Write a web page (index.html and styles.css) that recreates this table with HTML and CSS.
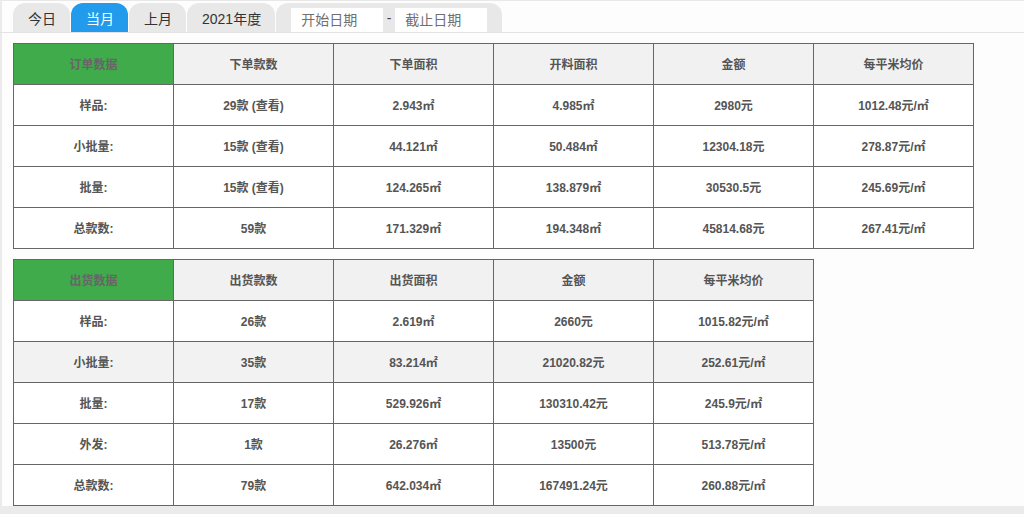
FILE: index.html
```html
<!DOCTYPE html>
<html lang="zh">
<head>
<meta charset="utf-8">
<link rel="stylesheet" href="styles.css">
</head>
<body>
<div class="page">
  <div class="tabbar">
    <div class="tab">今日</div>
    <div class="tab active">当月</div>
    <div class="tab">上月</div>
    <div class="tab">2021年度</div>
    <div class="tab range">
      <input class="date" type="text" placeholder="开始日期">
      <span class="dash">-</span>
      <input class="date" type="text" placeholder="截止日期">
    </div>
  </div>

  <table class="data t1">
    <tr class="head">
      <td class="green">订单数据</td><td>下单款数</td><td>下单面积</td><td>开料面积</td><td>金额</td><td>每平米均价</td>
    </tr>
    <tr><td>样品:</td><td>29款 (查看)</td><td>2.943㎡</td><td>4.985㎡</td><td>2980元</td><td>1012.48元/㎡</td></tr>
    <tr><td>小批量:</td><td>15款 (查看)</td><td>44.121㎡</td><td>50.484㎡</td><td>12304.18元</td><td>278.87元/㎡</td></tr>
    <tr><td>批量:</td><td>15款 (查看)</td><td>124.265㎡</td><td>138.879㎡</td><td>30530.5元</td><td>245.69元/㎡</td></tr>
    <tr><td>总款数:</td><td>59款</td><td>171.329㎡</td><td>194.348㎡</td><td>45814.68元</td><td>267.41元/㎡</td></tr>
  </table>

  <table class="data t2">
    <tr class="head">
      <td class="green">出货数据</td><td>出货款数</td><td>出货面积</td><td>金额</td><td>每平米均价</td>
    </tr>
    <tr><td>样品:</td><td>26款</td><td>2.619㎡</td><td>2660元</td><td>1015.82元/㎡</td></tr>
    <tr class="hover"><td>小批量:</td><td>35款</td><td>83.214㎡</td><td>21020.82元</td><td>252.61元/㎡</td></tr>
    <tr><td>批量:</td><td>17款</td><td>529.926㎡</td><td>130310.42元</td><td>245.9元/㎡</td></tr>
    <tr><td>外发:</td><td>1款</td><td>26.276㎡</td><td>13500元</td><td>513.78元/㎡</td></tr>
    <tr><td>总款数:</td><td>79款</td><td>642.034㎡</td><td>167491.24元</td><td>260.88元/㎡</td></tr>
  </table>
</div>
</body>
</html>
```

FILE: styles.css
```css
html, body {
  margin: 0;
  padding: 0;
}
body {
  background: #ebebeb;
  font-family: "Liberation Sans", "Noto Sans CJK SC", sans-serif;
  width: 1024px;
  height: 514px;
  overflow: hidden;
}
.page {
  margin-left: 2px;
  height: 506px;
  background: #fdfdfd;
  border-top: 1px solid #e8e8e8;
  box-sizing: border-box;
  padding: 2px 0 0 11px;
}
.tabbar {
  display: flex;
  gap: 1px;
  margin-left: -13px;
  padding-left: 13px;
  border-bottom: 1px solid #e3e3e3;
  height: 29px;
  align-items: flex-end;
}
.tab {
  height: 29px;
  display: flex;
  align-items: center;
  justify-content: center;
  padding: 0 14px 0 15px;
  background: #e8e8e8;
  border-radius: 12px 12px 0 0;
  font-size: 14px;
  color: #333;
}
.tab.active {
  background: #239bec;
  color: #fff;
}
.range {
  padding: 0 15px;
  width: 226px;
  box-sizing: border-box;
  gap: 0;
}
.date {
  width: 92px;
  height: 24px;
  margin-top: 4px;
  box-sizing: border-box;
  border: none;
  outline: none;
  background: #fff;
  padding: 0 0 0 10px;
  font-family: "Liberation Sans", "Noto Sans CJK SC", sans-serif;
  font-size: 14px;
  color: #333;
}
.date::placeholder { color: #6f6f6f; }
.dash {
  width: 12px;
  text-align: center;
  color: #444;
  font-size: 14px;
}
.data {
  border-collapse: collapse;
  margin-top: 10px;
  table-layout: fixed;
}
.t1 { width: 961px; }
.t2 { width: 801px; margin-top: 10px; }
.data td {
  width: 159px;
  height: 38px;
  padding: 0 0 2px;
  border: 1px solid #666;
  text-align: center;
  font-size: 12px;
  font-weight: bold;
  color: #555;
  background: #fff;
}
.data .head td { background: #f1f1f1; }
.data .head td.green { background: #3fab4b; color: #666; }
.data tr.hover td { background: #f2f2f2; }
```
